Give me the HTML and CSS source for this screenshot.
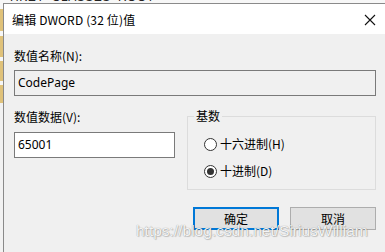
FILE: index.html
```html
<!DOCTYPE html>
<html lang="zh-CN">
<head>
<meta charset="utf-8">
<title>编辑 DWORD (32 位)值</title>
<link rel="stylesheet" href="styles.css">
</head>
<body>
<div class="screen">
  <div class="behind-top"><span class="behind-text">HKEY_CLASSES_ROOT</span></div>
  <div class="stage">
    <div class="behind-left"></div>
    <div class="dialog">
      <div class="titlebar">
        <span class="title">编辑 DWORD (32 位)值</span>
        <svg class="close" width="12" height="12" viewBox="0 0 12 12" aria-hidden="true">
          <path d="M1 1 L11 11 M11 1 L1 11" stroke="#111" stroke-width="1.1" fill="none"/>
        </svg>
      </div>
      <div class="content">
        <div class="label first">数值名称(N):</div>
        <div class="field readonly">CodePage</div>
        <div class="data-row">
          <div class="data-col">
            <div class="label second">数值数据(V):</div>
            <div class="field value">65001</div>
          </div>
          <fieldset class="radix">
            <legend>基数</legend>
            <div class="radio-row r1"><span class="radio"></span><span>十六进制(H)</span></div>
            <div class="radio-row r2"><span class="radio checked"></span><span>十进制(D)</span></div>
          </fieldset>
        </div>
        <div class="buttons">
          <div class="btn primary">确定</div>
          <div class="btn">取消</div>
        </div>
      </div>
    </div>
  </div>
  <div class="watermark">https://blog.csdn.net/SiriusWilliam</div>
</div>
</body>
</html>
```

FILE: styles.css
```css
html, body {
  margin: 0;
  padding: 0;
}
body {
  width: 385px;
  height: 252px;
  overflow: hidden;
  background: #f4f4f4;
  font-family: "Noto Sans CJK SC", "Noto Sans", sans-serif;
  font-size: 12px;
  color: #000;
}
.screen {
  position: relative;
  width: 385px;
  height: 252px;
  overflow: hidden;
}
.behind-top {
  height: 3px;
  overflow: hidden;
  background: #f7f7f7;
}
.behind-text {
  display: block;
  margin-top: -9px;
  margin-left: 10px;
  font-family: "Liberation Sans", sans-serif;
  font-size: 12px;
  line-height: 12px;
  color: #222;
  letter-spacing: 0.5px;
}
.stage {
  display: flex;
  height: 249px;
}
.behind-left {
  width: 3px;
  flex: none;
  background: linear-gradient(to bottom,
      #f7f7f7 0 6px, #e0c27a 6px 28px, #f7f7f7 28px 33px, #e0c27a 33px 54px,
      #f7f7f7 54px 58px, #e0c27a 58px 78px, #f7f7f7 78px 82px, #e0c27a 82px 100px,
      #f2f2f2 100px);
}
.dialog {
  flex: 1;
  display: flex;
  flex-direction: column;
  border-left: 1px solid #8a8a8a;
  border-top: 1px solid #8a8a8a;
  background: #f0f0f0;
}
.titlebar {
  height: 30px;
  flex: none;
  background: #fff;
  display: flex;
  align-items: center;
  justify-content: space-between;
  padding: 0 8px 0 8px;
}
.title {
  line-height: 16px;
  padding-top: 1px;
  letter-spacing: 0.15px;
}
.close {
  margin-right: 1px;
  margin-top: 1px;
}
.content {
  flex: 1;
  padding: 14px 8px 0 10px;
  display: flex;
  flex-direction: column;
}
.label {
  line-height: 16px;
  height: 16px;
}
.field {
  box-sizing: border-box;
  height: 26px;
  border: 1px solid #7a7a7a;
  padding: 0 3px;
  line-height: 24px;
  background: #fff;
  font-family: "Noto Sans", "Noto Sans CJK SC", sans-serif;
}
.label.first + .field {
  margin-top: 6px;
}
.field.readonly {
  background: #f0f0f0;
  width: 362px;
}
.data-row {
  margin-top: 12px;
  display: grid;
  grid-template-columns: 161px 189px;
  column-gap: 12px;
  align-items: start;
}
.label.second {
  margin-top: 1px;
}
.field.value {
  margin-top: 7px;
}
.radix {
  margin: 0;
  padding: 0 0 10px 16px;
  border: 1px solid #dcdcdc;
  min-width: 0;
}
.radix legend {
  margin-left: -10px;
  padding: 0 2px;
  line-height: 16px;
}
.radio-row {
  display: flex;
  align-items: center;
  height: 16px;
  line-height: 16px;
}
.radio-row.r1 { margin-top: 12px; }
.radio-row.r2 { margin-top: 11px; }
.radio {
  box-sizing: border-box;
  width: 13px;
  height: 13px;
  border: 1px solid #333;
  border-radius: 50%;
  background: #fff;
  margin-right: 3px;
  display: flex;
  align-items: center;
  justify-content: center;
}
.radio.checked::after {
  content: "";
  width: 7px;
  height: 7px;
  border-radius: 50%;
  background: #333;
}
.buttons {
  margin-top: 17px;
  display: flex;
  justify-content: flex-end;
  gap: 11px;
  padding-right: 1px;
}
.btn {
  box-sizing: border-box;
  width: 86px;
  height: 23px;
  border: 1px solid #adadad;
  background: #e1e1e1;
  display: flex;
  align-items: center;
  justify-content: center;
  line-height: 16px;
}
.btn.primary {
  border: 2px solid #0078d7;
}
.watermark {
  position: absolute;
  left: 136px;
  top: 222px;
  font-family: "Liberation Sans", sans-serif;
  font-size: 15.5px;
  line-height: 18px;
  color: rgba(255, 255, 255, 0.92);
  text-shadow: 0 0 1px rgba(0, 0, 0, 0.45), 1px 1px 1px rgba(0, 0, 0, 0.18);
  white-space: nowrap;
}
```
